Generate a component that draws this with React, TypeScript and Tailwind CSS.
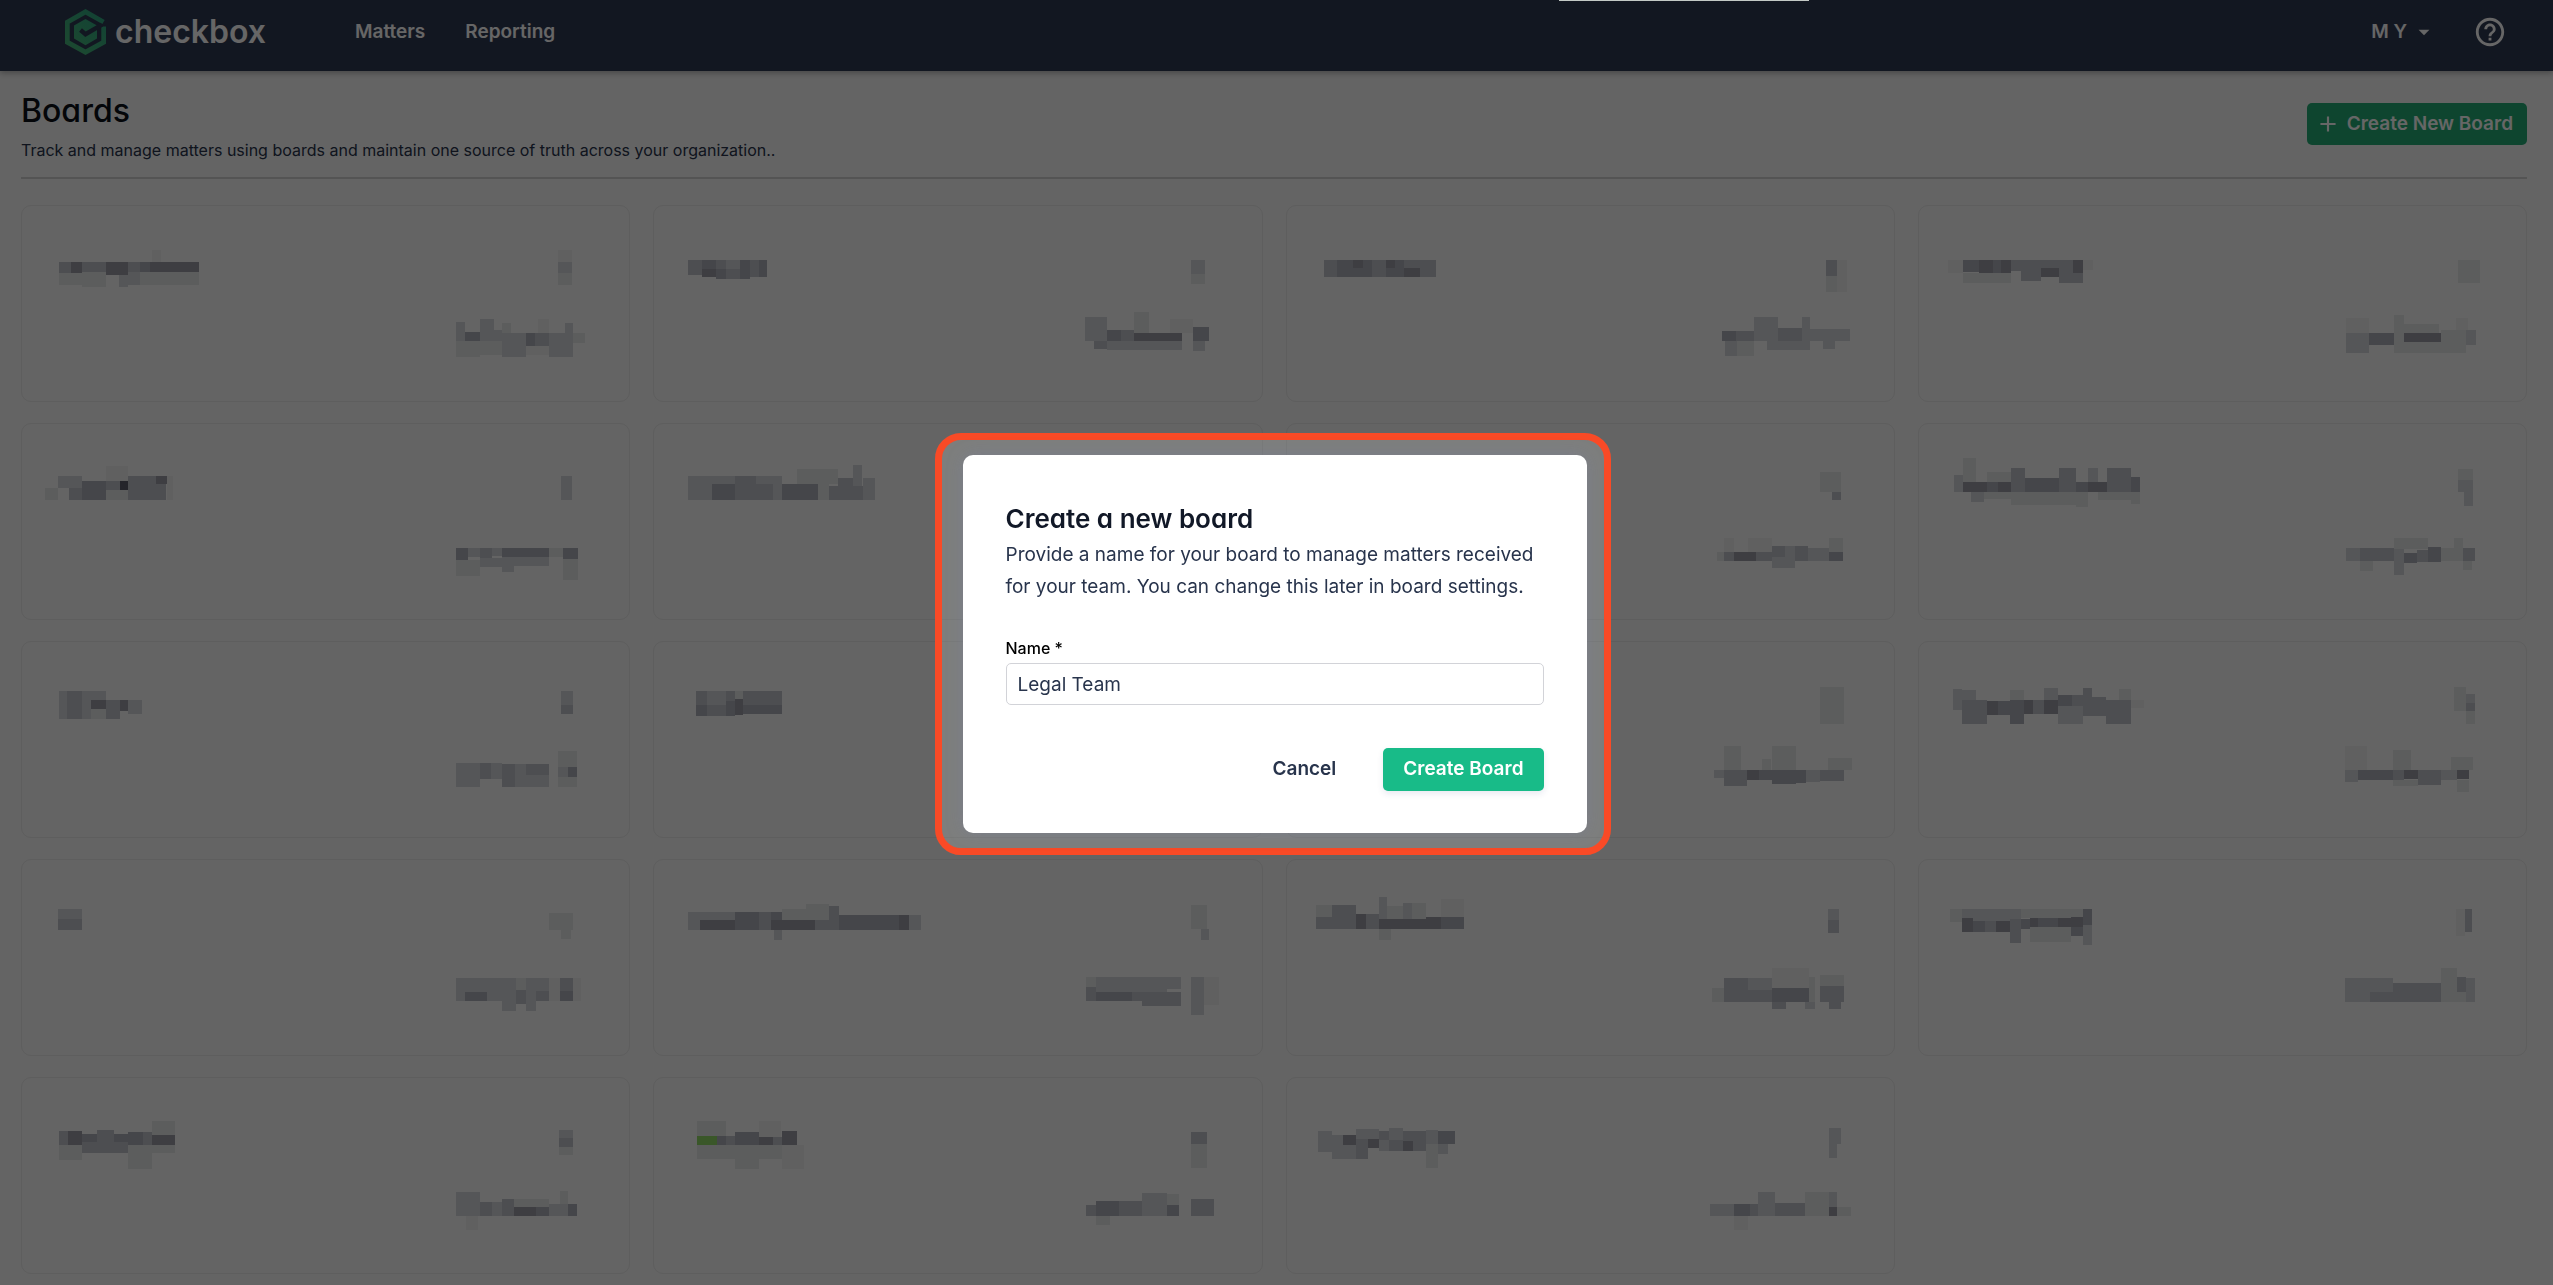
import React, { useState } from 'react';
import { MdArrowDropDown, MdAdd, MdHelpOutline } from 'react-icons/md';

// x, y, width, height, tone
type Cell = [number, number, number, number, number];

interface Board {
  name: Cell[];
  menu: Cell[];
  count: Cell[];
}

const TONES = [
  'fill-[#91da67]',
  'fill-[#f0f0f0]',
  'fill-[#e6e8e8]',
  'fill-[#d5d8dd]',
  'fill-[#c0c3ca]',
  'fill-[#adafba]',
  'fill-[#9b9ba6]',
  'fill-[#5e5e6c]',
];

const BOARDS: Board[] = [
  {
    name: [[23,17,12,11,4],[35,17,11,11,6],[46,17,24,10,4],[70,17,22,13,6],[92,17,12,10,4],[104,17,10,10,5],[114,17,25,10,6],[139,17,24,11,6],[23,28,23,12,2],[46,27,24,15,2],[83,30,9,12,3],[92,27,12,13,3],[104,27,59,13,2],[116,5,9,12,1]],
    menu: [[10,5,14,12,1],[10,17,14,11,3],[10,28,14,12,2]],
    count: [[4,13,9,19,3],[13,23,15,9,5],[28,10,14,22,3],[42,21,8,11,3],[50,14,9,10,2],[50,24,24,24,3],[74,24,9,13,5],[83,24,14,13,4],[97,24,24,24,3],[113,14,8,10,3],[86,10,11,14,1],[4,32,24,16,2],[28,32,22,14,2],[121,24,12,10,2],[74,37,23,9,1]],
  },
  {
    name: [[20,15,14,15,4],[34,15,14,9,5],[48,15,10,9,4],[58,15,14,9,3],[72,15,10,9,5],[82,15,9,9,4],[91,15,8,17,5],[34,24,14,8,6],[48,24,10,10,5],[58,24,14,10,4],[72,24,10,10,5],[82,24,9,8,4]],
    menu: [[10,15,14,14,3],[10,29,14,10,2]],
    count: [[0,8,22,24,3],[22,21,14,11,5],[36,21,13,11,4],[49,24,48,8,6],[49,3,15,21,2],[85,10,23,14,1],[9,32,13,8,4],[22,32,75,9,3],[108,18,16,14,5],[108,32,12,10,3]],
  },
  {
    name: [[23,15,13,17,4],[36,15,16,17,5],[52,15,10,8,6],[62,15,9,8,5],[52,23,19,9,5],[71,15,14,17,4],[85,15,9,8,6],[94,15,9,8,5],[85,23,18,9,5],[103,15,32,8,4],[103,23,16,9,6],[119,23,16,9,4]],
    menu: [[13,15,11,16,4],[13,31,11,16,2],[24,15,10,32,1]],
    count: [[5,22,14,10,5],[19,22,18,10,4],[37,8,24,24,3],[61,19,24,13,4],[85,8,8,24,3],[93,20,40,12,3],[8,32,12,15,3],[20,32,17,15,2],[50,32,43,9,3],[106,32,12,8,3]],
  },
  {
    name: [[15,15,15,13,1],[30,15,16,12,5],[46,15,14,13,6],[60,15,8,13,5],[68,15,10,13,6],[78,15,10,11,4],[88,15,20,10,4],[108,15,18,8,4],[126,15,14,9,4],[140,15,10,13,6],[30,28,48,10,2],[88,25,20,11,4],[108,23,18,9,6],[126,24,14,14,4],[140,28,10,10,4],[150,15,10,10,1]],
    menu: [[13,15,22,23,2]],
    count: [[-3,24,23,20,3],[20,24,25,12,5],[45,6,10,38,2],[55,15,35,9,2],[55,24,37,9,6],[55,33,37,11,2],[92,21,25,23,2],[107,9,12,12,1],[117,21,10,15,3],[-3,9,23,15,1]],
  },
  {
    name: [[9,25,13,12,2],[22,13,24,12,3],[33,25,13,12,4],[46,18,24,19,5],[70,3,22,15,1],[70,18,14,9,4],[84,18,8,9,7],[70,27,22,10,2],[92,13,28,24,4],[120,13,11,8,6],[120,21,10,16,4],[131,13,6,24,1]],
    menu: [[13,13,11,24,3]],
    count: [[4,21,12,12,5],[16,21,12,9,3],[28,21,12,10,4],[40,21,10,8,3],[50,21,47,9,5],[97,21,14,9,2],[111,21,15,11,5],[4,33,24,16,2],[28,31,22,9,3],[50,30,12,15,3],[62,30,35,9,3],[111,32,15,21,2]],
  },
  {
    name: [[20,13,24,24,3],[44,13,23,8,3],[67,13,21,8,4],[88,13,26,8,3],[44,21,23,16,5],[67,21,38,16,4],[114,21,36,16,5],[105,21,9,16,3],[129,6,41,15,2],[150,21,11,16,2],[170,15,15,8,4],[185,2,9,21,3],[161,23,34,14,4],[195,15,12,22,3]],
    menu: [],
    count: [],
  },
  {
    name: [],
    menu: [[7,9,21,20,2],[19,29,9,8,4]],
    count: [[0,25,7,9,2],[7,11,10,14,1],[7,25,10,9,4],[17,25,22,9,6],[39,25,16,9,4],[31,11,24,14,1],[55,19,13,11,4],[68,19,10,11,3],[78,19,13,15,4],[91,21,21,13,3],[112,11,14,14,2],[112,25,14,9,5],[55,30,23,11,3]],
  },
  {
    name: [[21,12,9,17,3],[30,-5,13,24,2],[54,9,24,10,2],[30,19,24,10,6],[54,19,11,10,5],[65,19,13,10,6],[78,5,14,24,4],[92,15,34,14,5],[126,5,17,24,4],[143,19,12,10,5],[155,5,10,14,3],[155,19,19,10,6],[174,5,24,24,4],[198,14,9,15,5],[38,29,13,10,3],[51,29,27,7,2],[78,29,65,13,2],[143,29,12,15,2],[165,29,33,8,2],[198,29,9,12,2]],
    menu: [[13,6,15,11,2],[13,17,15,12,3],[19,29,9,14,3]],
    count: [[-3,21,14,13,3],[11,21,34,13,4],[45,11,34,11,2],[45,22,10,26,3],[55,26,13,10,5],[68,23,11,12,4],[79,20,13,15,5],[92,21,22,13,2],[114,21,12,13,4],[11,34,13,10,2],[105,11,9,10,2],[114,34,9,9,2]],
  },
  {
    name: [[23,10,8,28,3],[31,10,15,28,4],[46,10,24,9,3],[46,19,9,19,3],[55,19,15,9,6],[55,28,15,10,2],[70,19,14,19,4],[84,19,8,11,6],[92,19,14,14,3]],
    menu: [[13,10,12,14,3],[13,24,12,9,4]],
    count: [[4,18,24,24,3],[28,18,11,16,4],[39,18,11,16,3],[50,19,13,23,4],[63,19,11,23,3],[74,19,23,11,4],[74,30,23,12,3],[106,6,19,16,2],[106,22,10,10,3],[116,22,9,10,5],[106,32,19,10,2]],
  },
  {
    name: [[28,10,11,14,4],[39,10,19,14,3],[58,10,9,10,4],[67,10,8,8,2],[75,10,39,14,4],[28,24,11,11,5],[39,24,19,11,4],[58,20,9,15,5],[67,18,8,16,6],[75,24,39,9,5]],
    menu: [],
    count: [],
  },
  {
    name: [],
    menu: [[7,6,24,37,2]],
    count: [[-3,25,10,8,3],[7,1,17,24,2],[7,25,23,16,4],[30,25,12,10,6],[42,25,13,10,5],[55,1,24,24,2],[55,25,24,14,5],[79,25,10,13,5],[89,25,14,12,3],[103,25,24,11,4],[45,14,9,11,2],[111,13,24,12,2]],
  },
  {
    name: [[20,8,9,21,3],[29,9,14,10,3],[29,19,25,24,4],[54,20,11,14,6],[65,20,12,14,5],[77,9,14,11,2],[77,19,14,24,5],[91,19,9,14,6],[100,19,11,14,4],[111,7,14,12,3],[111,19,14,14,6],[125,14,14,11,5],[139,14,11,11,4],[125,25,25,18,3],[150,7,9,28,4],[159,16,14,19,4],[173,19,25,24,4],[186,8,12,11,2],[198,19,13,8,1]],
    menu: [[9,6,12,24,2],[21,13,9,9,3],[21,22,9,8,4],[21,30,9,13,2]],
    count: [[-4,1,22,24,1],[-4,25,13,12,3],[9,25,35,10,5],[44,5,18,20,2],[44,25,11,10,4],[55,25,14,9,6],[69,25,23,15,4],[92,25,16,10,3],[102,12,22,13,2],[108,25,12,9,6],[44,35,25,6,2],[108,35,12,12,2]],
  },
  {
    name: [[22,10,24,10,3],[22,20,24,11,4]],
    menu: [[1,14,24,17,2],[13,31,10,9,2]],
    count: [[4,15,46,14,3],[4,26,9,12,3],[13,29,22,9,5],[35,29,15,9,3],[50,15,14,33,3],[64,15,10,12,2],[64,27,10,14,4],[74,15,23,13,3],[74,28,10,20,3],[84,28,13,10,4],[97,15,11,23,1],[108,15,13,14,4],[108,28,13,10,5],[121,15,8,23,1]],
  },
  {
    name: [[20,13,12,18,3],[32,13,35,8,3],[32,21,35,10,6],[67,13,24,18,5],[91,13,12,8,4],[91,21,12,10,4],[103,13,11,8,5],[103,21,11,10,6],[114,10,24,11,2],[114,21,33,10,6],[138,5,23,16,2],[147,21,14,10,4],[161,7,10,24,4],[171,16,60,15,5],[231,16,10,15,6],[241,16,12,15,3],[106,31,8,10,3]],
    menu: [[10,6,16,24,2],[20,30,8,11,3]],
    count: [[1,14,10,24,2],[1,24,10,14,4],[11,14,46,15,3],[57,14,25,15,3],[82,14,14,12,3],[11,29,36,9,5],[47,29,10,9,4],[57,29,39,14,4],[106,14,13,38,3],[119,14,15,28,1]],
  },
  {
    name: [[15,6,16,12,2],[15,18,16,12,4],[31,6,24,24,4],[55,15,10,15,6],[65,15,13,15,4],[78,-2,8,22,3],[86,7,16,13,2],[102,4,9,16,3],[111,4,14,16,2],[78,20,39,10,6],[117,20,8,10,6],[125,18,15,12,6],[140,18,23,12,5],[140,0,23,18,1],[78,30,12,11,2]],
    menu: [[15,10,11,11,3],[15,21,11,13,4]],
    count: [[-5,25,12,14,2],[7,15,24,24,4],[31,15,24,12,3],[31,27,14,12,4],[45,27,10,12,4],[55,5,37,20,1],[55,25,37,14,5],[92,14,6,25,2],[103,12,24,11,2],[103,23,24,16,4],[55,39,14,7,4],[88,39,10,7,3],[112,39,12,7,4]],
  },
  {
    name: [[17,10,12,13,2],[29,10,59,12,3],[29,19,11,14,6],[40,22,12,11,5],[52,22,11,11,4],[63,22,14,11,6],[77,20,11,24,4],[88,20,9,10,5],[88,10,62,9,2],[97,19,8,9,6],[105,19,20,9,5],[125,19,13,9,6],[138,18,12,10,6],[138,28,12,9,5],[150,10,9,16,5],[150,26,9,20,3],[97,28,41,15,2]],
    menu: [[11,10,9,27,1],[20,10,7,23,4]],
    count: [[-4,15,25,24,3],[21,15,23,14,3],[21,29,23,10,4],[44,20,25,19,4],[69,20,23,19,4],[92,5,16,24,2],[92,29,16,10,2],[108,14,9,15,4],[108,29,9,10,2],[117,15,9,24,3]],
  },
  {
    name: [[23,14,9,14,4],[32,14,14,14,6],[46,17,15,8,5],[61,13,17,14,4],[78,17,14,8,5],[92,15,15,13,5],[107,15,9,13,4],[116,4,23,14,2],[116,18,23,10,6],[23,28,23,15,2],[46,25,46,11,4],[92,28,24,24,2],[116,28,23,8,2]],
    menu: [[11,13,14,8,3],[11,21,14,9,4],[11,30,14,8,2]],
    count: [[4,11,24,24,3],[28,21,12,14,4],[40,21,10,14,3],[50,18,12,17,4],[62,18,35,8,2],[62,26,22,9,6],[84,26,13,9,5],[97,23,19,12,3],[116,23,9,12,5],[108,10,8,13,2],[14,35,12,14,1]],
  },
  {
    name: [[29,4,29,15,2],[29,19,20,9,0],[49,19,9,9,5],[58,19,9,9,4],[67,15,24,13,5],[91,4,22,16,1],[91,20,14,8,6],[105,20,9,8,4],[114,14,15,14,6],[29,28,38,14,2],[67,28,24,24,2],[91,28,23,14,2],[114,28,22,24,1]],
    menu: [[10,15,16,12,4],[10,27,16,24,2]],
    count: [[1,24,10,11,4],[11,20,23,15,5],[34,20,23,15,4],[57,12,25,23,3],[82,13,12,11,2],[82,24,12,11,5],[106,18,23,17,4],[11,35,14,9,2]],
  },
  {
    name: [[17,14,14,21,3],[31,18,11,24,3],[42,18,13,10,6],[42,28,13,14,3],[55,12,23,11,3],[55,22,12,20,4],[67,22,11,9,6],[78,14,10,9,4],[78,23,10,11,3],[88,11,14,12,3],[88,23,14,11,4],[102,14,10,10,4],[102,24,10,10,6],[112,14,13,20,4],[125,13,12,14,3],[137,14,17,13,5],[125,27,12,24,2],[137,27,10,10,3]],
    menu: [[16,11,12,16,3],[16,27,8,14,3]],
    count: [[-7,23,24,12,3],[17,23,16,12,5],[33,23,8,12,4],[41,11,17,24,3],[58,22,30,13,4],[88,11,24,24,2],[112,11,8,15,3],[112,26,8,9,6],[120,26,14,9,2],[17,35,14,14,1]],
  },
];

const Mosaic = ({ cells, className }: { cells: Cell[]; className: string }) => (
  <svg
    className={`overflow-visible ${className}`}
    shapeRendering="crispEdges"
    aria-hidden="true"
  >
    {cells.map(([x, y, width, height, tone], i) => (
      <rect
        key={i}
        x={x}
        y={y}
        width={width}
        height={height}
        className={TONES[tone]}
      />
    ))}
  </svg>
);

const Logo = () => (
  <svg width="41" height="46" viewBox="0 0 41 46" fill="none" aria-hidden="true">
    <defs>
      <linearGradient id="logo" x1="0" y1="46" x2="41" y2="0" gradientUnits="userSpaceOnUse">
        <stop stopColor="#4bb878" />
        <stop offset="1" stopColor="#2ba583" />
      </linearGradient>
    </defs>
    <path
      d="M38.5 13 20.5 2.8 2.3 13.2V33.2L20.5 43.2 38.7 33.2V17.5"
      stroke="url(#logo)"
      strokeWidth="4.8"
    />
    <path d="M20.5 10 32 16.5V29.5L20.5 36.2 9 29.5V16.5Z" fill="url(#logo)" />
    <path d="M15.5 21 20.5 25.2 37 15.6" stroke="#2f3a53" strokeWidth="4.4" />
  </svg>
);

const Header = () => (
  <header className="relative flex h-[71px] items-start justify-between bg-[#2f3a53] pt-[9px] pr-[46px] pl-[65px] text-white shadow-[0_2px_6px_rgba(0,0,0,0.3)]">
    <div className="flex items-center">
      <a href="#" className="flex items-center gap-[9px]">
        <Logo />
        <span className="text-[32px] leading-[42px] font-semibold">checkbox</span>
      </a>
      <nav className="ml-[89px] flex gap-10 text-[19px] leading-[46px] font-semibold">
        <a href="#">Matters</a>
        <a href="#">Reporting</a>
      </nav>
    </div>
    <div className="flex h-[46px] items-center gap-9">
      <button className="flex items-center gap-1 text-[19px] font-semibold">
        M Y
        <MdArrowDropDown size={26} />
      </button>
      <button aria-label="Help">
        <MdHelpOutline size={34} />
      </button>
    </div>
  </header>
);

const BoardCard = ({ name, menu, count }: Board) => (
  <li className="flex h-[197px] flex-col rounded-[10px] border border-[#eaeaea] pt-[39px] pr-[33px] pl-[14px]">
    <div className="flex justify-between">
      <Mosaic cells={name} className="h-16 w-[260px]" />
      <Mosaic cells={menu} className="h-16 w-12" />
    </div>
    <Mosaic cells={count} className="h-[72px] w-36 self-end" />
  </li>
);

const CreateBoardModal = () => {
  const [name, setName] = useState('Legal Team');

  return (
    <div className="fixed inset-0 flex items-center justify-center bg-black/60 pt-[3px] pr-2">
      <div className="rounded-[26px] border-[7px] border-[#f94a26] bg-[#c3c9c3]/25 py-[15px] pr-[17px] pl-[21px]">
        <form
          role="dialog"
          aria-labelledby="dialog-title"
          onSubmit={(event) => event.preventDefault()}
          className="w-[624px] rounded-[10px] bg-white px-[43px] pt-[46px] pb-[42px] text-[#28344c] shadow-[0_0_16px_rgba(120,130,170,0.35)]"
        >
          <h2
            id="dialog-title"
            className="text-[26px] leading-[36px] font-semibold text-[#111827] [font-feature-settings:'cv11']"
          >
            Create a new board
          </h2>
          <p className="mt-0.5 text-[19px] leading-[32px]">
            Provide a name for your board to manage matters received for your
            team. You can change this later in board settings.
          </p>
          <label
            htmlFor="board-name"
            className="mt-8 block text-[16px] leading-[26px] font-medium text-black"
          >
            Name *
          </label>
          <input
            id="board-name"
            value={name}
            onChange={(event) => setName(event.target.value)}
            className="mt-0.5 h-[42px] w-full rounded-[5px] border border-[#d2d3d8] px-[11px] text-[19px]"
          />
          <div className="mt-[43px] flex justify-end gap-[26px] text-[19px] font-semibold">
            <button type="button" className="h-[43px] px-[21px]">
              Cancel
            </button>
            <button
              type="submit"
              className="h-[43px] rounded-[5px] bg-[#18bb88] px-5 text-white shadow-[0_3px_6px_rgba(40,52,120,0.1)]"
            >
              Create Board
            </button>
          </div>
        </form>
      </div>
    </div>
  );
};

const App = () => (
  <div className="min-h-screen bg-[#fafafa] font-['Inter',sans-serif]">
    <Header />
    <main className="pr-[26px] pb-3 pl-[21px]">
      <div className="flex items-start justify-between border-b-2 border-[#d2d2d2] pt-[19px] pb-[14px]">
        <div>
          <h1 className="text-[32px] leading-[42px] font-medium text-[#0c1018] [font-feature-settings:'cv11']">
            Boards
          </h1>
          <p className="mt-[5px] text-[16px] leading-[26px] text-[#28344c]">
            Track and manage matters using boards and maintain one source of
            truth across your organization..
          </p>
        </div>
        <button className="mt-[13px] flex h-[42px] items-center gap-1.5 rounded-[5px] bg-[#23ad76] pr-[14px] pl-2 text-[19px] font-semibold text-white">
          <MdAdd size={26} />
          Create New Board
        </button>
      </div>
      <ul className="mt-[26px] grid grid-cols-4 gap-x-[23px] gap-y-[21px]">
        {BOARDS.map((board, i) => (
          <BoardCard key={i} {...board} />
        ))}
      </ul>
    </main>
    <CreateBoardModal />
    {/* edge of the notification tucked above the window */}
    <div className="fixed top-0 right-[744px] h-px w-[250px] bg-[#c3c9c5]" />
  </div>
);

export default App;
